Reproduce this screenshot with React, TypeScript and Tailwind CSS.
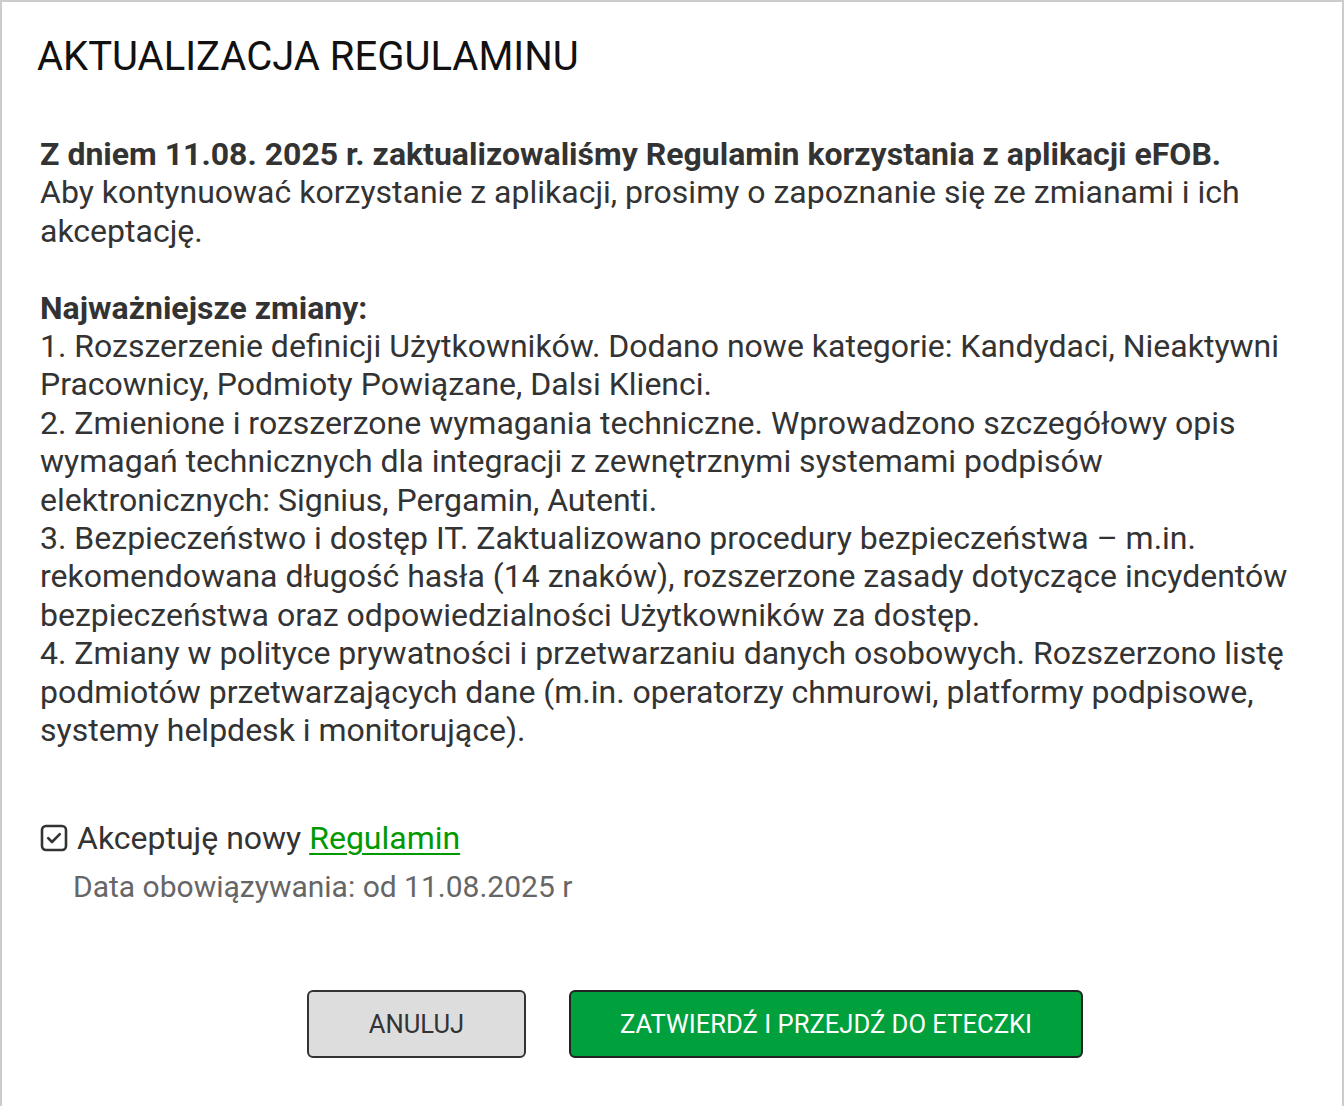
import React from "react";

const font = { fontFamily: "Roboto, 'Noto Sans', Arial, sans-serif" };

function CheckIcon() {
  return (
    <svg width="28" height="28" viewBox="0 0 28 28" className="shrink-0">
      <rect x="2" y="2" width="24" height="24" rx="4" fill="none" stroke="#333" strokeWidth="2.6" />
      <path d="M8.2 14.2l3.8 3.8 7.8-7.8" fill="none" stroke="#333" strokeWidth="2.6" strokeLinecap="round" strokeLinejoin="round" />
    </svg>
  );
}

export default function App() {
  return (
    <div className="w-[1344px] h-[1106px] bg-white overflow-hidden" style={font}>
      <div className="h-[1130px] border-2 border-[#cccccc] pl-[38px] pr-[20px] pt-[32px]">
        <h1 className="text-[40px] leading-[46px] text-[#111] font-normal -ml-[3px]">AKTUALIZACJA REGULAMINU</h1>

        <div className="mt-[55px] text-[32px] leading-[38.4px] text-[#333] whitespace-nowrap">
          <p>
            <b className="font-bold">Z dniem 11.08. 2025 r. zaktualizowaliśmy Regulamin korzystania z aplikacji eFOB.</b>
            <br />
            Aby kontynuować korzystanie z aplikacji, prosimy o zapoznanie się ze zmianami i ich
            <br />
            akceptację.
          </p>
          <p className="mt-[38.4px]">
            <b className="font-bold">Najważniejsze zmiany:</b>
            <br />
            1. Rozszerzenie definicji Użytkowników. Dodano nowe kategorie: Kandydaci, Nieaktywni
            <br />
            Pracownicy, Podmioty Powiązane, Dalsi Klienci.
            <br />
            2. Zmienione i rozszerzone wymagania techniczne. Wprowadzono szczegółowy opis
            <br />
            wymagań technicznych dla integracji z zewnętrznymi systemami podpisów
            <br />
            elektronicznych: Signius, Pergamin, Autenti.
            <br />
            3. Bezpieczeństwo i dostęp IT. Zaktualizowano procedury bezpieczeństwa – m.in.
            <br />
            rekomendowana długość hasła (14 znaków), rozszerzone zasady dotyczące incydentów
            <br />
            bezpieczeństwa oraz odpowiedzialności Użytkowników za dostęp.
            <br />
            4. Zmiany w polityce prywatności i przetwarzaniu danych osobowych. Rozszerzono listę
            <br />
            podmiotów przetwarzających dane (m.in. operatorzy chmurowi, platformy podpisowe,
            <br />
            systemy helpdesk i monitorujące).
          </p>
        </div>

        <div className="mt-[70px] flex items-center gap-[9px] text-[32px] leading-[38px] text-[#333]">
          <CheckIcon />
          <span>
            Akceptuję nowy{" "}
            <a href="#" className="text-[#009a00] underline decoration-2 underline-offset-[4px]">
              Regulamin
            </a>
          </span>
        </div>
        <div className="mt-[12px] pl-[33px] text-[30px] leading-[36px] text-[#666]">
          Data obowiązywania: od 11.08.2025 r
        </div>

        <div className="mt-[85px] flex justify-center gap-[43px] pl-[28px]">
          <button className="w-[219px] h-[68px] rounded-[6px] border-2 border-[#333] bg-[#dddddd] text-[25.6px] text-[#333]">
            ANULUJ
          </button>
          <button className="w-[514px] h-[68px] rounded-[6px] border-2 border-[#222] bg-[#00a13c] text-[25.6px] text-white">
            ZATWIERDŹ I PRZEJDŹ DO ETECZKI
          </button>
        </div>
      </div>
    </div>
  );
}
